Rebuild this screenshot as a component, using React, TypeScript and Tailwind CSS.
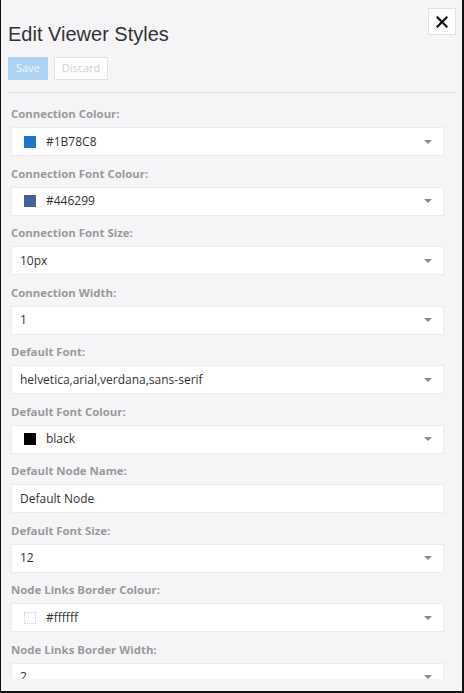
import React from "react";

type Field =
  | { label: string; kind: "color"; value: string; swatch: string; white?: boolean }
  | { label: string; kind: "select"; value: string }
  | { label: string; kind: "input"; value: string };

const fields: Field[] = [
  { label: "Connection Colour:", kind: "color", value: "#1B78C8", swatch: "#1B78C8" },
  { label: "Connection Font Colour:", kind: "color", value: "#446299", swatch: "#446299" },
  { label: "Connection Font Size:", kind: "select", value: "10px" },
  { label: "Connection Width:", kind: "select", value: "1" },
  { label: "Default Font:", kind: "select", value: "helvetica,arial,verdana,sans-serif" },
  { label: "Default Font Colour:", kind: "color", value: "black", swatch: "#000000" },
  { label: "Default Node Name:", kind: "input", value: "Default Node" },
  { label: "Default Font Size:", kind: "select", value: "12" },
  { label: "Node Links Border Colour:", kind: "color", value: "#ffffff", swatch: "#ffffff", white: true },
  { label: "Node Links Border Width:", kind: "select", value: "2" },
];

function Caret() {
  return (
    <span className="absolute right-[11px] top-1/2 -translate-y-1/2 w-0 h-0 border-l-[4px] border-r-[4px] border-t-[4px] border-l-transparent border-r-transparent border-t-[#8a8a8a]" />
  );
}

export default function App() {
  return (
    <div className="relative w-[464px] h-[693px] bg-[#f5f4f7] border-l border-r-2 border-b-2 border-[#111] flex flex-col overflow-hidden" style={{ fontFamily: '"Open Sans", "Noto Sans", sans-serif' }}>
      <button className="absolute left-[427px] top-[8px] w-[28px] h-[27px] bg-white border border-[#e2e2e2] flex items-center justify-center">
        <svg width="12" height="12" viewBox="0 0 12 12">
          <path d="M1.5 1.5 L10.5 10.5 M10.5 1.5 L1.5 10.5" stroke="#111" strokeWidth="2.2" strokeLinecap="square" />
        </svg>
      </button>
      <div className="px-[7px] pt-[22px]">
        <h2 className="text-[20px] leading-[24px] text-[#333]" style={{ fontFamily: '"Liberation Sans", Arial, sans-serif' }}>
          Edit Viewer Styles
        </h2>
        <div className="mt-[11px] flex gap-[6px]">
          <div className="w-[40px] h-[23px] bg-[#aed2f2] text-[#eef6fd] text-[11px] flex items-center justify-center">Save</div>
          <div className="w-[54px] h-[23px] bg-white border border-[#e3e3e3] text-[#cfcfcf] text-[11px] flex items-center justify-center">Discard</div>
        </div>
        <div className="mt-[12px] h-px bg-[#dcdcdc]" />
      </div>
      <div className="flex-1 overflow-hidden pt-[13px] pl-[10px] pr-[18px] mb-[12px]">
        {fields.map((f) => (
          <div key={f.label} className="mb-[9.5px]">
            <div className="text-[11.4px] leading-[16px] font-bold text-[#9a9a9a]">{f.label}</div>
            <div className="relative mt-[5px] h-[29px] bg-white border border-[#ececec] flex items-center text-[12px] text-[#333]">
              {f.kind === "color" ? (
                <>
                  <span
                    className={"ml-[12px] w-[12px] h-[12px] " + (f.white ? "border border-dotted border-[#cfcfcf]" : "")}
                    style={{ backgroundColor: f.swatch }}
                  />
                  <span className="ml-[10px]">{f.value}</span>
                </>
              ) : (
                <span className="ml-[8px]">{f.value}</span>
              )}
              {f.kind !== "input" && <Caret />}
            </div>
          </div>
        ))}
      </div>
    </div>
  );
}
